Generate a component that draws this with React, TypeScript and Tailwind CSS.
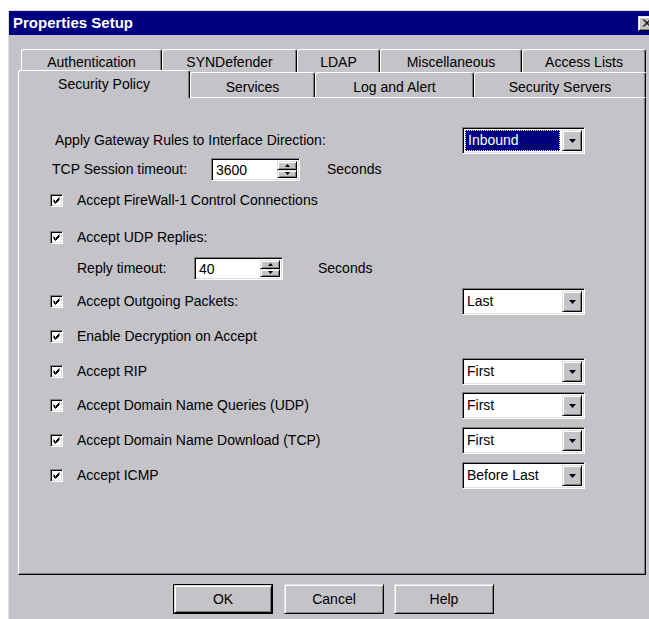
import React from "react";

const raised =
  "border border-t-[#dfdfdf] border-l-[#dfdfdf] border-r-black border-b-black shadow-[inset_1px_1px_0_#fff,inset_-1px_-1px_0_#808080] bg-[#c4c3c7]";
const sunken =
  "border border-t-[#808080] border-l-[#808080] border-r-white border-b-white shadow-[inset_1px_1px_0_#000,inset_-1px_-1px_0_#dfdfdf]";

function Tab({ label, className }: { label: string; className: string }) {
  return (
    <div
      className={`flex justify-center border-t border-l border-r border-t-white border-l-white border-r-black rounded-t-[3px] shadow-[inset_-1px_0_0_#808080] bg-[#c4c3c7] ${className}`}
    >
      {label}
    </div>
  );
}

function CheckBox() {
  return (
    <div className={`w-[13px] h-[13px] bg-white flex items-center justify-center ${sunken}`}>
      <svg width="9" height="9" viewBox="0 0 9 9">
        <path d="M1.5 3.5 L3.5 5.5 L7.5 1.5 M1.5 4.5 L3.5 6.5 L7.5 2.5 M1.5 5.5 L3.5 7.5 L7.5 3.5" stroke="#000" strokeWidth="1" fill="none" />
      </svg>
    </div>
  );
}

function DownArrow() {
  return (
    <svg width="7" height="4" viewBox="0 0 7 4">
      <polygon points="0,0 7,0 3.5,4" fill="#000" />
    </svg>
  );
}

function Select({ value, focused }: { value: string; focused?: boolean }) {
  return (
    <div className={`ml-auto w-[123px] h-[27px] flex p-[2px] bg-white ${sunken}`}>
      <div className="flex-1 flex items-center pr-[2px]">
        {focused ? (
          <div className="h-full w-full flex items-center pl-[2px] bg-[#000080] text-white border border-dotted border-[#ffff80]">
            {value}
          </div>
        ) : (
          <span className="pl-[2px]">{value}</span>
        )}
      </div>
      <div className={`w-[20px] flex items-center justify-center ${raised}`}>
        <DownArrow />
      </div>
    </div>
  );
}

function Spin({ value, className }: { value: string; className: string }) {
  return (
    <div className={`w-[89px] flex p-[2px] bg-white ${sunken} ${className}`}>
      <div className="flex-1 flex items-center pl-[2px] leading-none">{value}</div>
      <div className="w-[20px] flex flex-col">
        <div className={`flex-1 flex items-center justify-center ${raised}`}>
          <svg width="5" height="3" viewBox="0 0 5 3">
            <polygon points="0,3 5,3 2.5,0" fill="#000" />
          </svg>
        </div>
        <div className={`flex-1 flex items-center justify-center ${raised}`}>
          <svg width="5" height="3" viewBox="0 0 5 3">
            <polygon points="0,0 5,0 2.5,3" fill="#000" />
          </svg>
        </div>
      </div>
    </div>
  );
}

function CheckRow({ label, mt, right }: { label: string; mt: string; right?: string }) {
  return (
    <div className={`flex h-[27px] items-center pl-[31px] pr-[60px] ${mt}`}>
      <CheckBox />
      <span className="ml-[14px]">{label}</span>
      {right && <Select value={right} />}
    </div>
  );
}

function DlgButton({ label, isDefault, className }: { label: string; isDefault?: boolean; className?: string }) {
  if (isDefault) {
    return (
      <div className={`w-[100px] h-[30px] border border-black ${className ?? ""}`}>
        <div className={`w-full h-full flex items-center justify-center ${raised}`}>{label}</div>
      </div>
    );
  }
  return (
    <div className={`w-[100px] h-[30px] flex items-center justify-center ${raised} ${className ?? ""}`}>
      {label}
    </div>
  );
}

export default function App() {
  return (
    <div className="w-[649px] h-[619px] overflow-hidden bg-white pt-[10px] pl-[8px] font-['Liberation_Sans',Arial,sans-serif] text-[14px] text-black">
      <div className="w-[650px] h-[609px] bg-[#c4c3c7] border-l border-t border-[#dfdfdf]">
        {/* title bar */}
        <div className="h-[24px] bg-[#000080] flex items-center justify-between pl-[4px] pr-[3px]">
          <span className="text-white font-bold text-[15px]">Properties Setup</span>
          <div className={`w-[17px] h-[15px] flex items-center justify-center ${raised}`}>
            <svg width="9" height="8" viewBox="0 0 9 8">
              <path d="M1 0.5 L8 7.5 M2 0.5 L9 7.5 M8 0.5 L1 7.5 M9 0.5 L2 7.5" stroke="#000" strokeWidth="1" fill="none" />
            </svg>
          </div>
        </div>

        {/* tab rows */}
        <div className="mt-[14px] ml-[12px] flex">
          <Tab label="Authentication" className="w-[141px] h-[23px] pt-[2px]" />
          <Tab label="SYNDefender" className="w-[135px] h-[23px] pt-[2px]" />
          <Tab label="LDAP" className="w-[83px] h-[23px] pt-[2px]" />
          <Tab label="Miscellaneous" className="w-[142px] h-[23px] pt-[2px]" />
          <Tab label="Access Lists" className="w-[124px] h-[23px] pt-[2px]" />
        </div>
        <div className="ml-[9px] flex items-end h-[25px]">
          <Tab label="Security Policy" className="relative z-10 w-[172px] h-[28px] -mb-[1px] pt-[3px]" />
          <Tab label="Services" className="w-[125px] h-[25px] pt-[4px]" />
          <Tab label="Log and Alert" className="w-[159px] h-[25px] pt-[4px]" />
          <Tab label="Security Servers" className="w-[172px] h-[25px] pt-[4px]" />
        </div>

        {/* Security Policy page */}
        <div className="ml-[9px] w-[628px] h-[478px] border border-t-white border-l-white border-r-black border-b-black shadow-[inset_-1px_-1px_0_#808080] pt-[29px] flex flex-col">
          <div className="flex h-[27px] items-center pl-[36px] pr-[60px]">
            <span>Apply Gateway Rules to Interface Direction:</span>
            <Select value="Inbound" focused />
          </div>
          <div className="flex h-[27px] items-center pl-[33px] mt-[2px]">
            <span className="w-[159px]">TCP Session timeout:</span>
            <Spin value="3600" className="h-[23px]" />
            <span className="ml-[27px]">Seconds</span>
          </div>
          <CheckRow label="Accept FireWall-1 Control Connections" mt="mt-[4px]" />
          <CheckRow label="Accept UDP Replies:" mt="mt-[10px]" />
          <div className="flex h-[27px] items-center pl-[58px] mt-[4px]">
            <span className="w-[117px]">Reply timeout:</span>
            <Spin value="40" className="h-[23px]" />
            <span className="ml-[35px]">Seconds</span>
          </div>
          <CheckRow label="Accept Outgoing Packets:" mt="mt-[6px]" right="Last" />
          <CheckRow label="Enable Decryption on Accept" mt="mt-[8px]" />
          <CheckRow label="Accept RIP" mt="mt-[8px]" right="First" />
          <CheckRow label="Accept Domain Name Queries (UDP)" mt="mt-[7px]" right="First" />
          <CheckRow label="Accept Domain Name Download (TCP)" mt="mt-[8px]" right="First" />
          <CheckRow label="Accept ICMP" mt="mt-[8px]" right="Before Last" />
        </div>

        {/* dialog buttons */}
        <div className="mt-[9px] ml-[164px] flex">
          <DlgButton label="OK" isDefault />
          <DlgButton label="Cancel" className="ml-[11px]" />
          <DlgButton label="Help" className="ml-[10px]" />
        </div>
      </div>
    </div>
  );
}
